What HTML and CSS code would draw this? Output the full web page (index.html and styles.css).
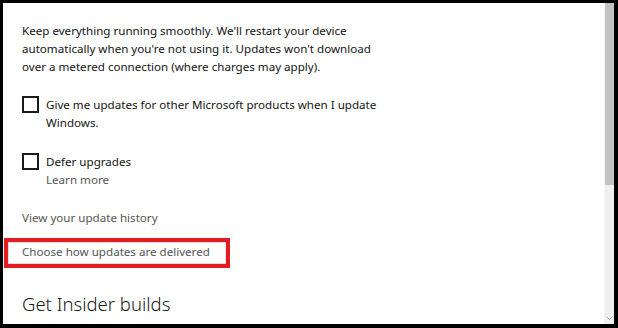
FILE: index.html
```html
<!DOCTYPE html>
<html lang="en">
<head>
  <meta charset="UTF-8">
  <title>Windows Update - Advanced options</title>
  <link rel="stylesheet" href="styles.css">
</head>
<body>
  <div class="window">
    <div class="content">
      <p class="intro">Keep everything running smoothly. We'll restart your device<br>
        automatically when you're not using it. Updates won't download<br>
        over a metered connection (where charges may apply).</p>

      <div class="check check-1">
        <span class="box"></span>
        <span class="label">Give me updates for other Microsoft products when I update<br>Windows.</span>
      </div>

      <div class="check check-2">
        <span class="box"></span>
        <span class="label">Defer upgrades<br><span class="link">Learn more</span></span>
      </div>

      <div class="link history">View your update history</div>

      <div class="highlight">
        <span class="link">Choose how updates are delivered</span>
      </div>

      <h2 class="insider">Get Insider builds</h2>
    </div>
    <div class="scrollbar">
      <div class="thumb"></div>
      <div class="track">
        <svg class="arrow" width="7" height="4" viewBox="0 0 7 4"><path d="M0.5 0.5 L3.5 3.5 L6.5 0.5" fill="none" stroke="#a8a8a8" stroke-width="1"/></svg>
      </div>
    </div>
  </div>
</body>
</html>
```

FILE: styles.css
```css
html, body {
  margin: 0;
  height: 100%;
}
body {
  background: #000;
  padding: 3px 4px 4px 3px;
  box-sizing: border-box;
  font-family: "Noto Sans", "Open Sans", sans-serif;
  font-size: 11.6px;
  color: #141414;
}
.window {
  background: #fff;
  height: 100%;
  display: flex;
  overflow: hidden;
}
.content {
  flex: 1;
  padding: 19px 0 0 19px;
}
.intro {
  margin: 0;
  line-height: 18px;
}
.check {
  display: flex;
  align-items: flex-start;
  gap: 7px;
  line-height: 18px;
}
.check-1 {
  margin-top: 20px;
}
.check-2 {
  margin-top: 21px;
}
.box {
  width: 13px;
  height: 13px;
  border: 2px solid #1a1a1a;
  margin-top: 0;
  flex: none;
}
.link {
  color: #555;
}
.history {
  margin-top: 20px;
  line-height: 18px;
}
.highlight {
  display: inline-block;
  margin: 11px 0 0 -18px;
  border: 4px solid #e31b23;
  padding: 1px 16px 3px 14px;
  line-height: 18px;
  outline: 1px solid #ddd;
  outline-offset: -5px;
}
.insider {
  margin: 23px 0 0;
  font-size: 18.5px;
  font-weight: 300;
  color: #1a1a1a;
  line-height: 26px;
}
.scrollbar {
  width: 9px;
  display: flex;
  flex-direction: column;
  border-left: 1px solid #f4f4f4;
}
.thumb {
  height: 182px;
  background: #c2c2c2;
}
.track {
  flex: 1;
  background: #f0f0f0;
  display: flex;
  align-items: flex-end;
  justify-content: center;
  padding-bottom: 4px;
}
```
